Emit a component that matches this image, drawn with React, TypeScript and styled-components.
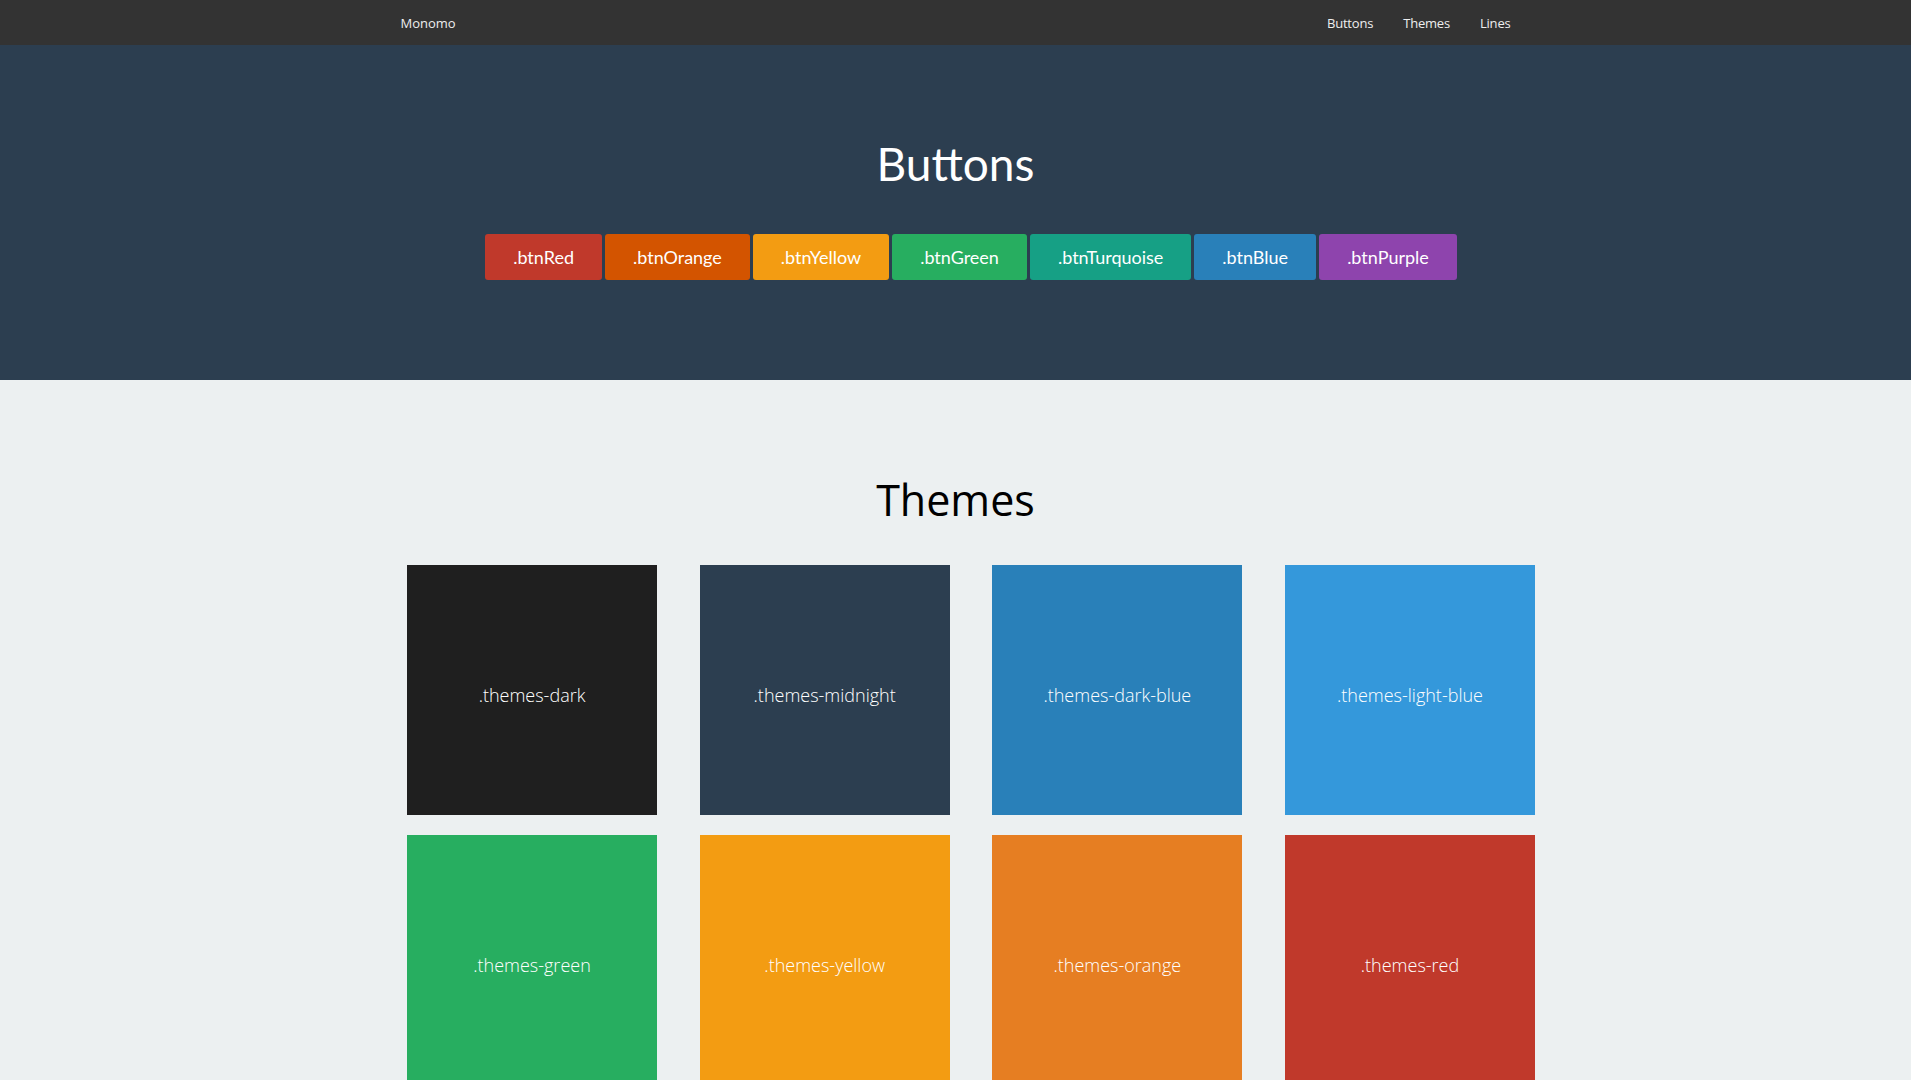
import React from 'react'
import styled, { createGlobalStyle } from 'styled-components'

const GlobalStyle = createGlobalStyle`
  html, body {
    margin: 0;
    padding: 0;
    background: #ecf0f1;
    font-family: 'Open Sans', 'Liberation Sans', sans-serif;
  }
  * {
    box-sizing: border-box;
  }
`

const buttons = [
  { label: '.btnRed', color: '#c0392b' },
  { label: '.btnOrange', color: '#d35400' },
  { label: '.btnYellow', color: '#f39c12' },
  { label: '.btnGreen', color: '#27ae60' },
  { label: '.btnTurquoise', color: '#16a085' },
  { label: '.btnBlue', color: '#2980b9' },
  { label: '.btnPurple', color: '#8e44ad' },
]

const themes = [
  { label: '.themes-dark', color: '#1f1f1f' },
  { label: '.themes-midnight', color: '#2c3e50' },
  { label: '.themes-dark-blue', color: '#2980b9' },
  { label: '.themes-light-blue', color: '#3498db' },
  { label: '.themes-green', color: '#27ae60' },
  { label: '.themes-yellow', color: '#f39c12' },
  { label: '.themes-orange', color: '#e67e22' },
  { label: '.themes-red', color: '#c0392b' },
]

const Navbar = styled.nav`
  height: 45px;
  background: #333333;
`

const NavInner = styled.div`
  max-width: 1140px;
  height: 100%;
  margin: 0 auto;
  padding: 0 15px;
  display: flex;
  align-items: center;
  justify-content: space-between;
  font-size: 13px;
  color: #eeeeee;
`

const Brand = styled.a`
  color: inherit;
  text-decoration: none;
`

const NavLinks = styled.div`
  display: flex;
  gap: 30px;
  letter-spacing: -0.2px;
`

const NavLink = styled.a`
  color: inherit;
  text-decoration: none;
`

const Hero = styled.section`
  height: 335px;
  background: #2c3e50;
  padding-top: 94px;
`

const HeroTitle = styled.h1`
  margin: 0 0 45px;
  font-family: Lato, 'Open Sans', sans-serif;
  font-weight: 400;
  font-size: 46px;
  line-height: 50px;
  color: #ffffff;
  text-align: center;
`

const ButtonRow = styled.div`
  display: flex;
  justify-content: center;
  gap: 3px;
  padding-left: 31px;
`

const ColorButton = styled.button<{ $bg: string }>`
  height: 46px;
  padding: 0 28px;
  border: none;
  border-radius: 3px;
  background: ${(p) => p.$bg};
  color: #ffffff;
  font-family: Lato, 'Open Sans', sans-serif;
  font-size: 18px;
  cursor: pointer;
`

const ThemesSection = styled.section`
  padding-top: 96px;
  padding-bottom: 60px;
`

const SectionTitle = styled.h2`
  margin: 0 0 41px;
  font-family: 'Open Sans', sans-serif;
  font-weight: 400;
  font-size: 43px;
  line-height: 48px;
  color: #000000;
  text-align: center;
`

const ThemeGrid = styled.div`
  display: grid;
  grid-template-columns: repeat(4, 250px);
  column-gap: 42.67px;
  row-gap: 20px;
  justify-content: center;
  padding-left: 31px;
`

const ThemeTile = styled.div<{ $bg: string }>`
  width: 250px;
  height: 250px;
  padding-top: 10px;
  display: flex;
  align-items: center;
  justify-content: center;
  background: ${(p) => p.$bg};
  color: #ffffff;
  font-family: 'Open Sans', sans-serif;
  font-weight: 300;
  font-size: 18px;
`

export default function App() {
  return (
    <>
      <GlobalStyle />
      <Navbar>
        <NavInner>
          <Brand href='#'>Monomo</Brand>
          <NavLinks>
            <NavLink href='#buttons'>Buttons</NavLink>
            <NavLink href='#themes'>Themes</NavLink>
            <NavLink href='#lines'>Lines</NavLink>
          </NavLinks>
        </NavInner>
      </Navbar>
      <Hero id='buttons'>
        <HeroTitle>Buttons</HeroTitle>
        <ButtonRow>
          {buttons.map((b) => (
            <ColorButton key={b.label} $bg={b.color}>
              {b.label}
            </ColorButton>
          ))}
        </ButtonRow>
      </Hero>
      <ThemesSection id='themes'>
        <SectionTitle>Themes</SectionTitle>
        <ThemeGrid>
          {themes.map((t) => (
            <ThemeTile key={t.label} $bg={t.color}>
              {t.label}
            </ThemeTile>
          ))}
        </ThemeGrid>
      </ThemesSection>
    </>
  )
}
